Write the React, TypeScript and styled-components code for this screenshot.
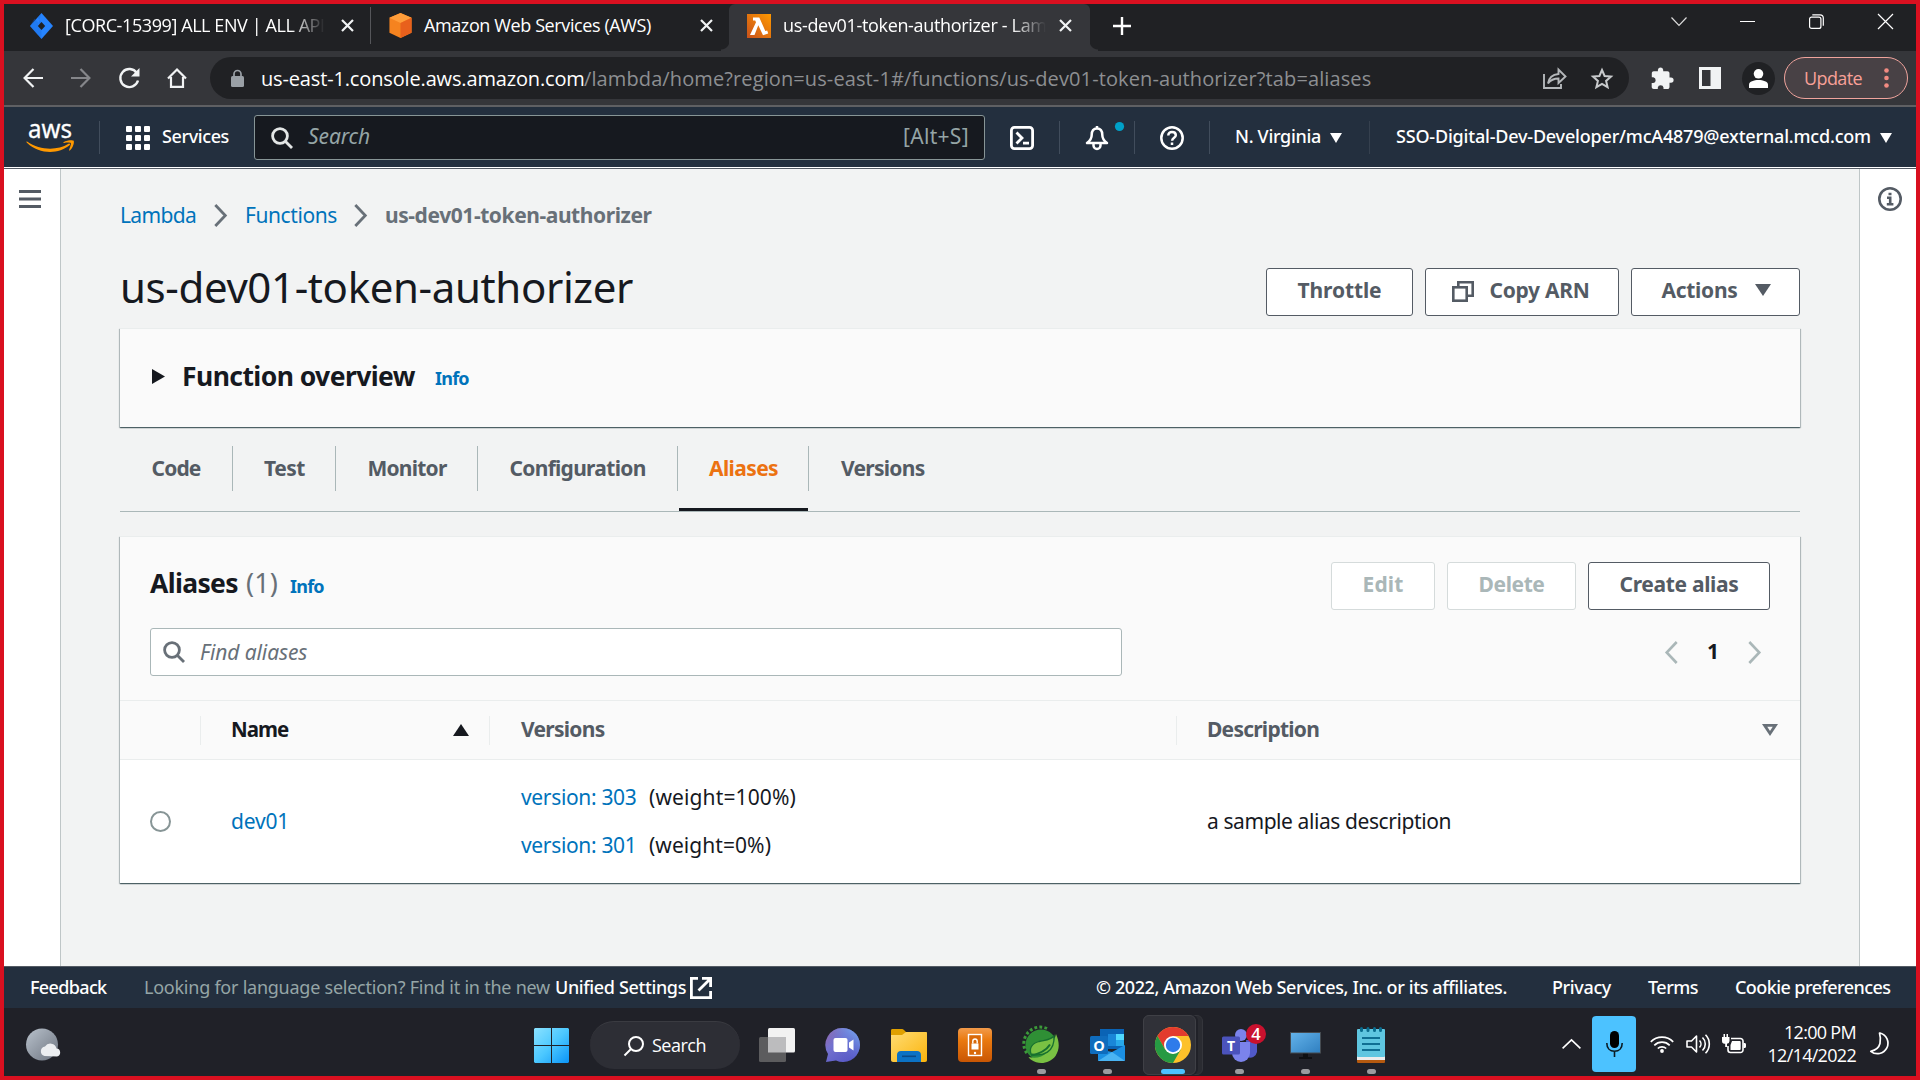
import React from "react";
import styled, { createGlobalStyle, css } from "styled-components";

const NOTO = '"Noto Sans", "Open Sans", sans-serif';
const OPEN = '"Open Sans", "Noto Sans", sans-serif';

const GlobalStyle = createGlobalStyle`
  * { box-sizing: border-box; }
  body { margin: 0; background: #d9101e; font-family: ${NOTO}; }
`;

const Screen = styled.div`
  width: 1920px;
  height: 1080px;
  border: 4px solid #d91020;
  display: flex;
  flex-direction: column;
  overflow: hidden;
`;

type LabelProps = {
  $w: number;
  $size?: number;
  $weight?: number;
  $ls?: number;
  $color?: string;
  $ml?: number;
  $italic?: boolean;
  $open?: boolean;
  $fade?: boolean;
  $up?: number;
  $down?: number;
};

const Label = styled.span<LabelProps>`
  flex: none;
  width: ${(p) => p.$w}px;
  margin-left: ${(p) => p.$ml ?? 0}px;
  padding-top: ${(p) => p.$down ?? 0}px;
  padding-bottom: ${(p) => p.$up ?? 0}px;
  font-family: ${(p) => (p.$open ? OPEN : NOTO)};
  font-size: ${(p) => p.$size ?? 21}px;
  font-weight: ${(p) => p.$weight ?? 400};
  font-style: ${(p) => (p.$italic ? "italic" : "normal")};
  letter-spacing: ${(p) => p.$ls ?? 0}px;
  line-height: 30px;
  color: ${(p) => p.$color ?? "#16191f"};
  white-space: nowrap;
  ${(p) =>
    p.$fade &&
    css`
      overflow: hidden;
      mask-image: linear-gradient(to right, #000 calc(100% - 34px), transparent);
    `}
`;

const Icon = styled.svg<{ $ml?: number; $mt?: number }>`
  flex: none;
  display: block;
  margin-left: ${(p) => p.$ml ?? 0}px;
  margin-top: ${(p) => p.$mt ?? 0}px;
  overflow: visible;
`;

/* ---------- Browser chrome ---------- */

const TabStrip = styled.div`
  height: 47px;
  background: #202124;
  display: flex;
  flex: none;
`;
const BrowserTab = styled.div<{ $w: number; $pl: number; $active?: boolean }>`
  position: relative;
  width: ${(p) => p.$w}px;
  padding-left: ${(p) => p.$pl}px;
  padding-bottom: 4px;
  display: flex;
  align-items: center;
  flex: none;
  ${(p) =>
    p.$active &&
    css`
      background: #35363a;
      border-radius: 6px 6px 0 0;
      &::before,
      &::after {
        content: "";
        position: absolute;
        bottom: 0;
        width: 8px;
        height: 10px;
      }
      &::before {
        left: -8px;
        background: radial-gradient(circle at 0 0, transparent 8px, #35363a 9px);
      }
      &::after {
        right: -8px;
        background: radial-gradient(circle at 100% 0, transparent 8px, #35363a 9px);
      }
    `}
`;
const Rule = styled.i<{ $h: number; $c: string; $ml?: number; $w?: number }>`
  flex: none;
  width: ${(p) => p.$w ?? 1}px;
  height: ${(p) => p.$h}px;
  margin-left: ${(p) => p.$ml ?? 0}px;
  background: ${(p) => p.$c};
`;
const WindowControls = styled.div`
  display: flex;
  align-items: flex-start;
  padding-left: 549px;
`;

const Toolbar = styled.div`
  height: 56px;
  flex: none;
  background: #35363a;
  border-bottom: 2px solid #5f6063;
  display: flex;
  align-items: center;
`;
const UrlBar = styled.div`
  flex: none;
  margin-left: 23px;
  width: 1419px;
  height: 42px;
  border-radius: 21px;
  background: #202124;
  display: flex;
  align-items: center;
`;
const Avatar = styled.div`
  flex: none;
  margin-left: 21px;
  width: 33px;
  height: 33px;
  border-radius: 50%;
  background: #202124;
  display: grid;
  place-items: center;
`;
const UpdatePill = styled.div`
  flex: none;
  margin-left: 9px;
  width: 124px;
  height: 42px;
  border: 1.5px solid #f0a49d;
  border-radius: 21px;
  background: #484145;
  display: flex;
  align-items: center;
`;

/* ---------- AWS navigation ---------- */

const AwsNav = styled.header`
  height: 62px;
  flex: none;
  background: #232f3e;
  border-bottom: 1px solid #545b64;
  box-shadow: inset 0 -1px 0 #fff;
  display: flex;
  align-items: center;
`;
const NavSearch = styled.div`
  flex: none;
  margin-left: 25px;
  width: 731px;
  height: 45px;
  border: 1px solid #879596;
  border-radius: 3px;
  background: #16191f;
  display: flex;
  align-items: center;
`;

/* ---------- Console page ---------- */

const PageBody = styled.div`
  flex: 1;
  min-height: 0;
  display: flex;
`;
const SidePanel = styled.aside<{ $w: number; $side: "left" | "right" }>`
  flex: none;
  width: ${(p) => p.$w}px;
  background: #fff;
  border-${(p) => (p.$side === "left" ? "right" : "left")}: 1px solid #bfc6c7;
`;
const Main = styled.main`
  flex: 1;
  background: #f2f3f3;
  padding: 31px 59px 0 59px;
`;
const Breadcrumb = styled.nav`
  height: 29px;
  display: flex;
  align-items: center;
`;
const TitleRow = styled.div`
  height: 48px;
  margin-top: 39px;
  display: flex;
  align-items: center;
`;
const PageTitle = styled.h1`
  margin: 0 auto 10px 0;
  font-size: 42px;
  font-weight: 400;
  letter-spacing: -0.374px;
  line-height: 48px;
  color: #16191f;
  white-space: nowrap;
`;
const ButtonGroup = styled.div`
  display: flex;
  gap: 12px;
`;
const Button = styled.button<{ $w: number; $disabled?: boolean }>`
  width: ${(p) => p.$w}px;
  height: 48px;
  padding: 0 0 4px;
  display: flex;
  align-items: center;
  justify-content: center;
  background: #fff;
  border: 1px solid ${(p) => (p.$disabled ? "#d5dbdb" : "#545b64")};
  border-radius: 3px;
`;
const cardFrame = css`
  border-top: 1px solid #eaeded;
  box-shadow: 0 1px 1px 0 rgba(0, 28, 36, 0.5), 1px 1px 1px 0 rgba(0, 28, 36, 0.2), -1px 1px 1px 0 rgba(0, 28, 36, 0.2);
`;
const OverviewCard = styled.section`
  ${cardFrame}
  height: 99px;
  margin-top: 12px;
  padding-bottom: 5px;
  background: #fafafa;
  display: flex;
  align-items: center;
`;
const TabBar = styled.div`
  height: 66px;
  margin-top: 19px;
  border-bottom: 1px solid #aab7b8;
  display: flex;
`;
const TabItem = styled.div<{ $w: number; $active?: boolean }>`
  width: ${(p) => p.$w}px;
  display: flex;
  flex-direction: column;
  ${(p) =>
    p.$active &&
    css`
      &::after {
        content: "";
        height: 4px;
        margin: 17px 1px 0;
        background: #16191f;
      }
    `}
`;
const TabFace = styled.div<{ $last?: boolean }>`
  height: 45px;
  flex: none;
  padding-bottom: 2px;
  border-right: ${(p) => (p.$last ? "0" : "1px solid #aab7b8")};
  display: flex;
  align-items: center;
  justify-content: center;
`;

const TableCard = styled.section`
  ${cardFrame}
  margin-top: 24px;
  background: #fff;
`;
const TableTools = styled.div`
  height: 164px;
  padding: 25px 30px 0;
  background: #fafafa;
  border-bottom: 1px solid #eaeded;
`;
const ToolRow = styled.div`
  height: 48px;
  display: flex;
  align-items: center;
  & + & {
    margin-top: 18px;
  }
`;
const Push = styled.div`
  margin-left: auto;
  display: flex;
  align-items: center;
`;
const FilterBox = styled.div`
  width: 972px;
  height: 48px;
  border: 1px solid #aab7b8;
  border-radius: 3px;
  background: #fff;
  display: flex;
  align-items: center;
`;
const gridColumns = css`
  display: grid;
  grid-template-columns: 80px 289px 687px 1fr;
  align-items: center;
`;
const HeadRow = styled.div`
  ${gridColumns}
  height: 59px;
  background: #fafafa;
  border-bottom: 1px solid #eaeded;
`;
const HeadCell = styled.div`
  height: 29px;
  padding-left: 30px;
  border-left: 1px solid #eaeded;
  display: flex;
  align-items: center;
`;
const BodyRow = styled.div`
  ${gridColumns}
  height: 123px;
`;
const Cell = styled.div`
  padding-left: 31px;
  display: flex;
  align-items: center;
`;
const VersionList = styled.div`
  padding-left: 32px;
  display: flex;
  flex-direction: column;
`;
const VersionLine = styled.div`
  height: 48px;
  display: flex;
  align-items: center;
`;
const Radio = styled.span`
  width: 21px;
  height: 21px;
  margin-left: 30px;
  border: 2px solid #879596;
  border-radius: 50%;
  background: #fff;
`;

const Footer = styled.footer`
  height: 42px;
  flex: none;
  background: #232f3e;
  border-top: 1px solid #545b64;
  display: flex;
  align-items: center;
`;

/* ---------- Taskbar ---------- */

const Taskbar = styled.div`
  height: 68px;
  flex: none;
  background: #202128;
  display: flex;
`;
const Slot = styled.div<{ $w: number; $ml?: number }>`
  flex: none;
  position: relative;
  width: ${(p) => p.$w}px;
  margin-left: ${(p) => p.$ml ?? 0}px;
  display: flex;
  flex-direction: column;
  align-items: center;
`;
const SlotIcon = styled.div`
  position: relative;
  height: 44px;
  margin-top: 15px;
  display: flex;
  align-items: center;
  justify-content: center;
`;
const RunDot = styled.i<{ $active?: boolean }>`
  position: relative;
  margin-top: 2px;
  width: ${(p) => (p.$active ? 24 : 9)}px;
  height: 5px;
  border-radius: 3px;
  background: ${(p) => (p.$active ? "#4cc2ff" : "#9b9b9f")};
`;
const ActivePlate = styled.div<{ $back?: boolean }>`
  position: absolute;
  left: 3px;
  top: 7px;
  width: ${(p) => (p.$back ? 60 : 53)}px;
  height: 60px;
  border-radius: 6px;
  background: ${(p) => (p.$back ? "#2a2b31" : "#303138")};
  border: 1px solid ${(p) => (p.$back ? "#34353b" : "#3f4046")};
  box-shadow: ${(p) => (p.$back ? "none" : "2px 0 0 #202128")};
`;
const SearchPill = styled.div`
  flex: none;
  margin: 13px 0 0 21px;
  width: 150px;
  height: 48px;
  border-radius: 24px;
  background: #2d2e35;
  border-top: 1px solid #3a3b41;
  display: flex;
  align-items: center;
`;
const Tray = styled.div`
  display: flex;
  align-items: center;
  padding-top: 3px;
`;
const MicButton = styled.div`
  flex: none;
  margin-left: 11px;
  width: 44px;
  height: 56px;
  border-radius: 4px;
  background: #4cc2ff;
  display: grid;
  place-items: center;
`;
const Clock = styled.div`
  width: 96px;
  margin: 0 0 0 14px;
  display: flex;
  flex-direction: column;
  align-items: flex-end;
  font: 400 18px/23px ${OPEN};
  letter-spacing: -0.7px;
  color: #fff;
`;

/* ---------- Icons ---------- */

const CloseX = ({ ml }: { ml: number }) => (
  <Icon $ml={ml} width="13" height="13" viewBox="0 0 13 13" stroke="#f1f3f4" strokeWidth="2.2">
    <path d="M1 1l11 11M12 1L1 12" />
  </Icon>
);
const Caret = ({ ml, color = "#fff", w = 12, h = 10, up = false }: { ml: number; color?: string; w?: number; h?: number; up?: boolean }) => (
  <Icon $ml={ml} width={w} height={h} viewBox="0 0 12 10" preserveAspectRatio="none">
    <path d={up ? "M6 0l6 10H0z" : "M0 0h12L6 10z"} fill={color} />
  </Icon>
);
const Magnifier = ({ ml, color }: { ml: number; color: string }) => (
  <Icon $ml={ml} width="22" height="22" viewBox="0 0 22 22" fill="none" stroke={color} strokeWidth="2.8">
    <circle cx="9" cy="9" r="7.4" />
    <path d="M14 14l7 7" />
  </Icon>
);
const ChevronRight = ({ ml, color = "#687078", w = 13 }: { ml: number; color?: string; w?: number }) => (
  <Icon $ml={ml} $mt={1} width={w} height="23" viewBox="0 0 13 23" fill="none" stroke={color} strokeWidth="2.8">
    <path d="M1.3 1l10 10.5-10 10.5" />
  </Icon>
);

const JiraIcon = () => (
  <Icon width="23" height="26" viewBox="0 0 23 24" preserveAspectRatio="none">
    <path d="M11.5 0L23 12 11.500 24 0 12z" fill="#2684ff" />
    <path d="M11.500 0L7.500 4.200l4 4.200v3.600L4.500 5 0 12l11.500 12V16L7.800 12z" fill="#1667db" opacity=".35" />
    <path d="M11.500 8.200L15.200 12l-3.700 3.800L7.800 12z" fill="#202124" />
  </Icon>
);
const CubeIcon = () => (
  <Icon width="23" height="25" viewBox="0 0 23 26">
    <path d="M11.500 0L23 5v15.500L11.500 26 0 20.500V5z" fill="#f5831f" />
    <path d="M11.500 0L23 5l-11.500 5.500L0 5z" fill="#ff9d3a" />
    <path d="M23 5v15.500L11.500 26V10.500z" fill="#e8601c" />
  </Icon>
);
const LambdaIcon = () => (
  <Icon width="24" height="24" viewBox="0 0 24 24">
    <defs>
      <linearGradient id="lam" x1="0" y1="1" x2="1" y2="0">
        <stop offset="0" stopColor="#c8511b" />
        <stop offset="1" stopColor="#f90" />
      </linearGradient>
    </defs>
    <path d="M0 0h24v24H0z" fill="url(#lam)" />
    <path d="M6 3.500h6.300l6 13.500 1.900-.6 1 3.200-5.200 1.700-4.700-10L7.500 21H3l6-12.800-.8-1.700H6z" fill="#fff" />
  </Icon>
);

function BrowserTabs() {
  return (
    <TabStrip>
      <BrowserTab $w={368} $pl={26}>
        <JiraIcon />
        <Label $w={260} $ml={12} $up={1} $open $size={18} $ls={-0.41} $color="#fff" $fade>[CORC-15399] ALL ENV | ALL API</Label>
        <CloseX ml={16} />
        <Rule $h={37} $c="#55565a" $ml={16} />
      </BrowserTab>
      <BrowserTab $w={357} $pl={17}>
        <CubeIcon />
        <Label $w={227} $ml={12} $up={1} $open $size={18} $ls={-0.392} $color="#fff">Amazon Web Services (AWS)</Label>
        <CloseX ml={49} />
      </BrowserTab>
      <BrowserTab $w={361} $pl={18} $active>
        <LambdaIcon />
        <Label $w={263} $ml={12} $up={1} $open $size={18} $ls={-0.33} $color="#fff" $fade>us-dev01-token-authorizer - Lam</Label>
        <CloseX ml={13} />
      </BrowserTab>
      <BrowserTab $w={30} $pl={23}>
        <Icon width="18" height="18" viewBox="0 0 18 18" stroke="#fff" strokeWidth="2.4">
          <path d="M9 0v18M0 9h18" />
        </Icon>
      </BrowserTab>
      <WindowControls>
        <Icon $mt={13} $ml={2} width="16" height="9" viewBox="0 0 16 9" fill="none" stroke="#ddd" strokeWidth="1.2"><path d="M.5.5L8 8.300 15.500.5" /></Icon>
        <Icon $mt={17} $ml={53} width="15" height="1" viewBox="0 0 15 1"><path d="M0 0h15v1H0z" fill="#fff" /></Icon>
        <Icon $mt={10} $ml={54} width="15" height="15" viewBox="0 0 15 15" fill="none" stroke="#fff" strokeWidth="1.2">
          <rect x=".6" y="3.100" width="11.300" height="11.300" rx="2" />
          <path d="M3.300.8h7.700a3.300 3.300 0 013.300 3.300v7.700" />
        </Icon>
        <Icon $mt={10} $ml={54} width="15" height="15" viewBox="0 0 15 15" stroke="#fff" strokeWidth="1.2"><path d="M0 0l15 15M15 0L0 15" /></Icon>
      </WindowControls>
    </TabStrip>
  );
}

function BrowserToolbar() {
  return (
    <Toolbar>
      <Icon $ml={19} width="20" height="20" viewBox="0 0 20 20" fill="none" stroke="#f1f3f4" strokeWidth="2.2"><path d="M10.500 1L1.600 10l8.900 9M1.600 10H20" /></Icon>
      <Icon $ml={28} width="20" height="20" viewBox="0 0 20 20" fill="none" stroke="#85868a" strokeWidth="2.200"><path d="M9.500 1l8.900 9-8.900 9M18.400 10H0" /></Icon>
      <Icon $ml={28} width="21" height="20" viewBox="0 0 21 20" fill="none" stroke="#f1f3f4" strokeWidth="2.400">
        <path d="M17.800 5A9 9 0 1 0 19 12.500" />
        <path d="M20.500 0v8.500H12z" fill="#f1f3f4" stroke="none" />
      </Icon>
      <Icon $ml={27} width="20" height="20" viewBox="0 0 20 20" fill="none" stroke="#f1f3f4" strokeWidth="2.200"><path d="M1 10.500L10 1.500l9 9M4 9v9.800h12V9" /></Icon>
      <UrlBar>
        <Icon $ml={21} width="13" height="17" viewBox="0 0 13 17">
          <rect y="6" width="13" height="11" rx="1.500" fill="#9aa0a6" />
          <path d="M3 7V4a3.500 3.500 0 017 0v3" fill="none" stroke="#9aa0a6" strokeWidth="1.700" />
        </Icon>
        <Label $w={323} $ml={17} $down={2} $open $size={20} $ls={-0.15} $color="#fff">us-east-1.console.aws.amazon.com</Label>
        <Label $w={787} $down={2} $open $size={20} $ls={0.11} $color="#8d8f92">/lambda/home?region=us-east-1#/functions/us-dev01-token-authorizer?tab=aliases</Label>
        <Icon $ml={172} width="24" height="21" viewBox="0 0 24 21" fill="none" stroke="#b4b7ba" strokeWidth="1.900">
          <path d="M1 6v14h17v-4" />
          <path d="M5 15.500C6 9 10 6.500 15.500 6V1.500L22.500 8.500l-7 6.500v-4.500C11 10.500 8 11.500 5 15.500z" />
        </Icon>
        <Icon $ml={24} width="22" height="21" viewBox="0 0 22 21" fill="none" stroke="#c8cacc" strokeWidth="2"><path d="M11 2l2.600 6 6.400.6-4.900 4.300 1.500 6.300L11 15.800l-5.600 3.400 1.500-6.300L2 8.600 8.400 8z" /></Icon>
      </UrlBar>
      <Icon $ml={22} width="22" height="22" viewBox="0 0 22 22" fill="#f1f3f4">
        <path d="M20 10.500h-1.500V6.300c0-1.200-.9-2.100-2.100-2.100h-4.200V2.700a2.700 2.700 0 00-5.300 0v1.500H2.800C1.600 4.200.8 5.100.8 6.300v4h1.500a2.900 2.900 0 010 5.700H.7v4c0 1.100 1 2 2.100 2h4v-1.500a2.900 2.900 0 015.700 0V22h4c1.100 0 2-.9 2-2.100v-4.200H20a2.600 2.600 0 000-5.200z" />
      </Icon>
      <Icon $ml={26} width="22" height="22" viewBox="0 0 22 22"><path d="M0 0h22v22H0zM3 3v16h8.500V3z" fill="#f1f3f4" fillRule="evenodd" /></Icon>
      <Avatar>
        <Icon width="19" height="19" viewBox="0 0 19 19" fill="#fff">
          <circle cx="9.500" cy="4.800" r="4.800" />
          <path d="M0 19v-3.500c0-3 5-4.500 9.500-4.500s9.500 1.500 9.500 4.500V19z" />
        </Icon>
      </Avatar>
      <UpdatePill>
        <Label $w={58} $ml={19} $open $size={18} $ls={-0.615} $color="#f8a097">Update</Label>
        <Icon $ml={22} width="5" height="20" viewBox="0 0 5 20" fill="#f28b82">
          <circle cx="2.500" cy="2.500" r="2.300" /><circle cx="2.500" cy="10" r="2.300" /><circle cx="2.500" cy="17.500" r="2.300" />
        </Icon>
      </UpdatePill>
    </Toolbar>
  );
}

function ConsoleNav() {
  const nav = { $size: 18, $weight: 500, $color: "#fff" };
  return (
    <AwsNav>
      <Icon $ml={23} width="48" height="30" viewBox="0 0 48 30">
        <text x="1" y="15" fontFamily={NOTO} fontSize="26" fontWeight="400" fill="#fff" stroke="#fff" strokeWidth=".3" textLength="44" lengthAdjust="spacingAndGlyphs">aws</text>
        <path d="M0 18.500c13.500 9 30 9.200 41.500 2.200 1.200-.7 2.200.6 1 1.600C31.500 31.500 12.500 31.500.2 20c-.9-.8-1.200-2-.2-1.500z" fill="#f90" />
        <path d="M36.500 19.200c3.500-2.300 9.500-2.500 10.200-1.400.7 1.300-.4 6.900-3.800 9.600-.6.4-1.100.2-.8-.5.8-1.900 2.300-5.800 1.700-6.800-.6-.9-4.500-.6-6.700-.2-.7 0-1.100-.4-.6-.7z" fill="#f90" />
      </Icon>
      <Rule $h={33} $c="#414d5c" $ml={24} />
      <Icon $ml={26} width="24" height="24" viewBox="0 0 24 24" fill="#fff">
        {[0, 9, 18].map((y) => [0, 9, 18].map((x) => <rect key={`${x}-${y}`} x={x} y={y} width="6" height="6" rx="1" />))}
      </Icon>
      <Label {...nav} $w={67} $ml={12} $ls={-0.391} $up={3}>Services</Label>
      <NavSearch>
        <Magnifier ml={16} color="#e3e6e6" />
        <Label $w={62} $ml={15} $ls={-0.1} $up={3} $italic $color="#95a5a6">Search</Label>
        <Push><Label $w={81} $ls={0.3} $up={3} $color="#95a5a6">[Alt+S]</Label></Push>
      </NavSearch>
      <Icon $ml={25} width="24" height="24" viewBox="0 0 24 24" fill="none" stroke="#fff" strokeWidth="2.800">
        <rect x="1.400" y="1.400" width="21.200" height="21.200" rx="3" />
        <path d="M6.500 6.500L12 12l-5.500 5.500M13 17.200h6" />
      </Icon>
      <Rule $h={33} $c="#414d5c" $ml={25} />
      <Icon $ml={25} width="40" height="24" viewBox="0 0 40 24" fill="none" stroke="#fff" strokeWidth="2.500">
        <path d="M12 2.500c-4 0-5.300 3.200-5.300 6.500 0 4-2 6-4.700 8h20c-2.700-2-4.700-4-4.700-8 0-3.300-1.300-6.500-5.300-6.500zM12 0v3" strokeLinejoin="round" />
        <path d="M8.500 17.500v2a3.500 3.500 0 007 0v-2" />
        <circle cx="34.500" cy="0.500" r="4.600" fill="#00a1c9" stroke="none" />
      </Icon>
      <Rule $h={33} $c="#414d5c" $ml={9} />
      <Icon $ml={25} width="24" height="24" viewBox="0 0 24 24" fill="none" stroke="#fff" strokeWidth="2.500">
        <circle cx="12" cy="12" r="10.700" />
        <path d="M8.300 9.500C8.300 7.400 9.800 6 12 6s3.800 1.300 3.800 3.200c0 2.600-3.700 2.500-3.700 5.600M12 16.500v2.500" />
      </Icon>
      <Rule $h={33} $c="#414d5c" $ml={25} />
      <Label {...nav} $w={86} $ml={25} $ls={-0.307} $up={3}>N. Virginia</Label>
      <Caret ml={9} />
      <Rule $h={33} $c="#35404e" $ml={27} />
      <Label {...nav} $w={475} $ml={26} $ls={-0.192} $up={3}>SSO-Digital-Dev-Developer/mcA4879@external.mcd.com</Label>
      <Caret ml={9} />
    </AwsNav>
  );
}

const LINK = "#0073bb";
const bold = { $weight: 700, $color: "#545b64" };

const sections: { name: string; w: number; lw: number; ls: number }[] = [
  { name: "Code", w: 113, lw: 49, ls: -0.85 },
  { name: "Test", w: 103, lw: 40, ls: -0.46 },
  { name: "Monitor", w: 142, lw: 78, ls: -0.78 },
  { name: "Configuration", w: 200, lw: 136, ls: -0.71 },
  { name: "Aliases", w: 131, lw: 68, ls: -0.61 },
  { name: "Versions", w: 148, lw: 84, ls: -0.72 },
];

const versions = [
  { id: "303", weight: "100%", w: 147, ls: 0.127 },
  { id: "301", weight: "0%", w: 122, ls: 0.061 },
];

function AliasesTable() {
  return (
    <TableCard>
      <TableTools>
        <ToolRow>
          <Label $w={88} $size={26.500} $weight={700} $ls={-0.65} $up={6}>Aliases</Label>
          <Label $w={32} $ml={8} $size={27} $ls={0.115} $up={6} $color="#687078">(1)</Label>
          <Label $w={34} $ml={12} $size={18} $weight={700} $ls={-0.78} $color={LINK}>Info</Label>
          <Push>
            <ButtonGroup>
              <Button $w={104} $disabled><Label {...bold} $w={41} $ls={0.14} $color="#aab7b8">Edit</Label></Button>
              <Button $w={129} $disabled><Label {...bold} $w={66} $ls={-0.39} $color="#aab7b8">Delete</Label></Button>
              <Button $w={182}><Label {...bold} $w={119} $ls={-0.327}>Create alias</Label></Button>
            </ButtonGroup>
          </Push>
        </ToolRow>
        <ToolRow>
          <FilterBox>
            <Magnifier ml={12} color="#687078" />
            <Label $w={107} $ml={15} $ls={-0.1} $up={1} $italic $color="#687078">Find aliases</Label>
          </FilterBox>
          <Push>
            <Icon width="13" height="23" viewBox="0 0 13 23" fill="none" stroke="#aab7b8" strokeWidth="2.600"><path d="M11.700 1l-10 10.500 10 10.500" /></Icon>
            <Label $w={12} $ml={29} $weight={700} $up={3}>1</Label>
            <Icon $ml={29} width="13" height="23" viewBox="0 0 13 23" fill="none" stroke="#aab7b8" strokeWidth="2.600"><path d="M1.300 1l10 10.500-10 10.500" /></Icon>
            <Rule $h={1} $w={9} $c="transparent" />
          </Push>
        </ToolRow>
      </TableTools>
      <HeadRow>
        <span />
        <HeadCell>
          <Label $w={57} $weight={700} $size={20.500} $ls={-1} $up={3}>Name</Label>
          <Caret ml={165} w={16} h={12} color="#16191f" up />
        </HeadCell>
        <HeadCell><Label {...bold} $w={84} $ml={1} $ls={-0.72} $up={3}>Versions</Label></HeadCell>
        <HeadCell>
          <Label {...bold} $w={112} $ls={-0.76} $up={3}>Description</Label>
          <Icon $ml={443} width="16" height="12" viewBox="0 0 16 12" fill="none" stroke="#687078" strokeWidth="2.800"><path d="M2.600 1.400h10.800L8 9.500z" /></Icon>
        </HeadCell>
      </HeadRow>
      <BodyRow>
        <Radio />
        <Cell><Label $w={57} $ls={-0.2} $up={2} $color={LINK}>dev01</Label></Cell>
        <VersionList>
          {versions.map((v) => (
            <VersionLine key={v.id}>
              <Label $w={115} $ls={-0.34} $up={1} $color={LINK}>version: {v.id}</Label>
              <Label $w={v.w} $ml={13} $ls={v.ls} $up={1}>(weight={v.weight})</Label>
            </VersionLine>
          ))}
        </VersionList>
        <Cell><Label $w={244} $ls={-0.418} $up={2}>a sample alias description</Label></Cell>
      </BodyRow>
    </TableCard>
  );
}

function ConsolePage() {
  return (
    <PageBody>
      <SidePanel $w={57} $side="left">
        <Icon $ml={15} $mt={21} width="22" height="18" viewBox="0 0 22 18" fill="#545b64"><path d="M0 0h22v3H0zM0 7.500h22v3H0zM0 15h22v3H0z" /></Icon>
      </SidePanel>
      <Main>
        <Breadcrumb>
          <Label $w={76} $ls={-0.672} $color={LINK}>Lambda</Label>
          <ChevronRight ml={18} />
          <Label $w={92} $ml={18} $ls={-0.41} $color={LINK}>Functions</Label>
          <ChevronRight ml={17} />
          <Label $w={266} $ml={18} $weight={700} $ls={-0.43} $color="#687078">us-dev01-token-authorizer</Label>
        </Breadcrumb>
        <TitleRow>
          <PageTitle>us-dev01-token-authorizer</PageTitle>
          <ButtonGroup>
            <Button $w={147}><Label {...bold} $w={84} $ls={-0.11}>Throttle</Label></Button>
            <Button $w={194}>
              <Icon $mt={3} width="22" height="21" viewBox="0 0 22 21" fill="none" stroke="#545b64" strokeWidth="2.600">
                <rect x="1.300" y="6.300" width="13.400" height="13.400" />
                <path d="M6.300 6V1.300h14.400v13.400H15" />
              </Icon>
              <Label {...bold} $w={105} $ml={13} $ls={-0.287}>Copy ARN</Label>
            </Button>
            <Button $w={169}>
              <Label {...bold} $w={75} $ml={1} $ls={-0.297}>Actions</Label>
              <Caret ml={18} w={16} h={12} color="#545b64" />
            </Button>
          </ButtonGroup>
        </TitleRow>
        <OverviewCard>
          <Icon $ml={32} $mt={2} width="13" height="15" viewBox="0 0 13 15"><path d="M0 0l13 7.500L0 15z" fill="#16191f" /></Icon>
          <Label $w={233} $ml={17} $size={26.500} $weight={700} $ls={-0.57}>Function overview</Label>
          <Label $w={34} $ml={20} $down={4} $size={18} $weight={700} $ls={-0.78} $color={LINK}>Info</Label>
        </OverviewCard>
        <TabBar>
          {sections.map((s) => {
            const active = s.name === "Aliases";
            return (
              <TabItem key={s.name} $w={s.w} $active={active}>
                <TabFace $last={s.name === "Versions"}>
                  <Label {...bold} $w={s.lw} $ls={s.ls} $color={active ? "#ec7211" : "#545b64"}>{s.name}</Label>
                </TabFace>
              </TabItem>
            );
          })}
        </TabBar>
        <AliasesTable />
      </Main>
      <SidePanel $w={57} $side="right">
        <Icon $ml={18} $mt={18} width="24" height="24" viewBox="0 0 24 24" fill="none" stroke="#545b64" strokeWidth="2.600">
          <circle cx="12" cy="12" r="10.700" />
          <path d="M9 10.800h3.200V17M8.800 17.200h6.600M10.500 7h3" />
        </Icon>
      </SidePanel>
    </PageBody>
  );
}

function ConsoleFooter() {
  const link = { $size: 18, $weight: 500, $color: "#fff", $up: 1 };
  return (
    <Footer>
      <Label {...link} $w={77} $ml={26} $ls={-0.65}>Feedback</Label>
      <Label $w={406} $ml={37} $size={18} $ls={-0.242} $up={1} $color="#95a5a6">Looking for language selection? Find it in the new</Label>
      <Label {...link} $w={131} $ml={5} $ls={-0.372}>Unified Settings</Label>
      <Icon $ml={4} width="22" height="22" viewBox="0 0 22 22" fill="none" stroke="#fff" strokeWidth="2.800">
        <path d="M8 1.400H1.400v19.200h19.200V14M12 1.400h8.600V10M20.600 1.400L8.500 13.500" />
      </Icon>
      <Label {...link} $w={411} $ml={384} $ls={-0.385}>© 2022, Amazon Web Services, Inc. or its affiliates.</Label>
      <Label {...link} $w={59} $ml={45} $ls={-0.368}>Privacy</Label>
      <Label {...link} $w={50} $ml={37} $ls={-0.522}>Terms</Label>
      <Label {...link} $w={156} $ml={37} $ls={-0.57}>Cookie preferences</Label>
    </Footer>
  );
}

const TaskViewIcon = () => (
  <Icon width="36" height="34" viewBox="0 0 36 34">
    <rect x="9" width="27" height="24.500" rx="1.500" fill="#f2f2f2" />
    <rect y="9" width="27" height="25" rx="1.500" fill="#5c5c5e" />
    <rect x="9" y="9" width="18" height="15.500" fill="#bcbcbe" />
  </Icon>
);
const ChatIcon = () => (
  <Icon width="34" height="34" viewBox="0 0 34 34">
    <defs>
      <linearGradient id="chat" x1="0" y1="0" x2=".8" y2="1">
        <stop offset="0" stopColor="#a1679f" />
        <stop offset=".4" stopColor="#7472cf" />
        <stop offset="1" stopColor="#5455c4" />
      </linearGradient>
      <linearGradient id="chat2" x1="1" y1="0" x2=".3" y2=".7">
        <stop offset="0" stopColor="#78b4f8" />
        <stop offset="1" stopColor="#5b5cc9" stopOpacity="0" />
      </linearGradient>
    </defs>
    <path d="M17 0a17 17 0 11-7 32.500L0 34l2-8A17 17 0 0117 0z" fill="url(#chat)" />
    <path d="M17 0a17 17 0 11-7 32.500L0 34l2-8A17 17 0 0117 0z" fill="url(#chat2)" />
    <rect x="7.500" y="10" width="14" height="14" rx="2" fill="#fff" />
    <path d="M23 14.500l4.500-3v11l-4.500-3z" fill="#fff" />
  </Icon>
);
const FolderIcon = () => (
  <Icon width="36" height="33" viewBox="0 0 36 33">
    <defs>
      <linearGradient id="fold" x1="0" y1="0" x2="1" y2="1">
        <stop offset="0" stopColor="#ffdc73" />
        <stop offset="1" stopColor="#fbb40c" />
      </linearGradient>
    </defs>
    <path d="M0 1.500C0 .5.500 0 1.500 0h9c1.500 0 2 .5 3 1.500L15.500 3.500V7H0z" fill="#dfa000" />
    <path d="M0 6h11l4-3h20c.6 0 1 .4 1 1v27c0 1-.5 2-2 2H2c-1 0-2-1-2-2z" fill="url(#fold)" />
    <path d="M6 33v-7c0-2.500 1.500-4 4-4h16c2.500 0 4 1.500 4 4v7z" fill="#0c72c4" />
    <path d="M11 27.300h14" stroke="#0a4a87" strokeWidth="1.600" />
  </Icon>
);
const OrangeIcon = () => (
  <Icon width="34" height="34" viewBox="0 0 34 34">
    <defs>
      <linearGradient id="org" x1="0" y1="0" x2="0" y2="1">
        <stop offset="0" stopColor="#f29a4a" />
        <stop offset=".35" stopColor="#ea7a10" />
        <stop offset="1" stopColor="#c95604" />
      </linearGradient>
    </defs>
    <rect width="34" height="34" rx="4" fill="url(#org)" />
    <rect x="10.500" y="6.500" width="13" height="21" fill="#d9690a" stroke="#fff" strokeWidth="1.400" />
    <rect x="13.500" y="15.500" width="7" height="6" fill="#fff" />
    <path d="M14.800 15.500v-2.300a2.200 2.200 0 014.400 0v2.300" fill="none" stroke="#fff" strokeWidth="1.400" />
    <circle cx="17" cy="25" r="1.200" fill="#fff" />
  </Icon>
);
const SpringIcon = () => (
  <Icon width="36" height="36" viewBox="0 0 36 36">
    <circle cx="18" cy="18" r="15.500" fill="#2f8f35" />
    <path d="M24 1.500A16.500 16.500 0 0 0 4.500 27" fill="none" stroke="#3c9a3a" strokeWidth="3" strokeDasharray="2.800 2.200" />
    <path d="M33 7c3.500 8 4 15-.5 22-6 8-17 9-24 4 0 0-2-1-3-3 12 3 23-3 27.500-23z" fill="#79c143" />
    <path d="M31 9C28 13 22 13 16 14.500 9 16.500 6 21 8 27c12 3 24-2 23-18z" fill="#79c143" stroke="#17702f" strokeWidth="1.300" />
    <path d="M8 28.500c7.500-1.500 15-4.500 19-11" fill="none" stroke="#17702f" strokeWidth="2" />
  </Icon>
);
const OutlookIcon = () => (
  <Icon width="35" height="32" viewBox="0 0 35 32">
    <path d="M10 0h24v20H10z" fill="#0a63b5" />
    <path d="M18 5h8v6h-8zM18 11h8v6h-8z" fill="#1a86d8" />
    <path d="M26 5h8v6h-8z" fill="#50d9ff" /><path d="M26 11h8v6h-8z" fill="#28a8ea" />
    <path d="M8 20l14 3 13-7v15c0 .6-.4 1-1 1H9c-.6 0-1-.4-1-1z" fill="#1b8fe3" />
    <path d="M8 32l14-9 13 9z" fill="#4ab4f3" />
    <rect y="7" width="18" height="18" rx="1.500" fill="#0f6cbd" />
    <text x="9" y="21.500" textAnchor="middle" fontFamily={OPEN} fontWeight="700" fontSize="14.500" fill="#fff">O</text>
  </Icon>
);
const ChromeIcon = () => (
  <Icon width="36" height="36" viewBox="0 0 36 36">
    <circle cx="18" cy="18" r="18" fill="#fdc12a" />
    <path d="M18 9h15.600A18 18 0 002.400 9l7.800 13.500z" fill="#e33b2e" />
    <path d="M2.400 9A18 18 0 0018 36l7.800-13.500L18 27l-7.800-4.500z" fill="#269a43" />
    <circle cx="18" cy="18" r="9" fill="#fff" />
    <circle cx="18" cy="18" r="7.200" fill="#2f7bea" />
  </Icon>
);
const TeamsIcon = () => (
  <Icon width="35" height="33" viewBox="0 0 35 33">
    <path d="M24 11h11v12a7 7 0 01-10 5z" fill="#5059c9" />
    <circle cx="19" cy="6" r="6" fill="#7b83eb" />
    <path d="M10 13h18v11a9 9 0 01-18 0z" fill="#7b83eb" />
    <rect y="7.500" width="18" height="18" rx="1.500" fill="#4b53bc" />
    <text x="9" y="21.500" textAnchor="middle" fontFamily={OPEN} fontWeight="700" fontSize="14" fill="#fff">T</text>
    <circle cx="34" cy="5" r="10" fill="#c9112e" />
    <text x="34" y="11" textAnchor="middle" fontFamily={OPEN} fontWeight="600" fontSize="16.500" fill="#fff">4</text>
  </Icon>
);
const MonitorIcon = () => (
  <Icon width="31" height="27" viewBox="0 0 31 27">
    <defs>
      <linearGradient id="mon" x1="0" y1="0" x2="1" y2="1">
        <stop offset="0" stopColor="#64b3ea" />
        <stop offset="1" stopColor="#2f7fc0" />
      </linearGradient>
    </defs>
    <path d="M13 21h5v4h4v2H9v-2h4z" fill="#0f1013" />
    <rect x=".5" y=".5" width="30" height="20.500" fill="url(#mon)" stroke="#454b51" />
  </Icon>
);
const NotepadIcon = () => (
  <Icon width="28" height="36" viewBox="0 0 28 36">
    <path d="M0 33h28v1.500c0 1-.5 1.500-1.500 1.500h-25C.5 36 0 35.500 0 34.500z" fill="#b4590f" />
    <path d="M0 29h28v4H0z" fill="#ececec" />
    <rect y="2" width="28" height="28" rx="1" fill="#5fc6e0" />
    <path d="M5 11h18M5 17h18M5 23h18" stroke="#0f6f93" strokeWidth="2" />
    <path d="M4.500 1.500v2M11 1.500v2M17.500 1.500v2M23.500 1.500v2" stroke="#0a6c8e" strokeWidth="3" strokeLinecap="round" />
  </Icon>
);

const apps: { key: string; icon: React.ReactNode; state?: "open" | "active" }[] = [
  { key: "taskview", icon: <TaskViewIcon /> },
  { key: "chat", icon: <ChatIcon /> },
  { key: "folder", icon: <FolderIcon /> },
  { key: "orange", icon: <OrangeIcon /> },
  { key: "spring", icon: <SpringIcon />, state: "open" },
  { key: "outlook", icon: <OutlookIcon />, state: "open" },
  { key: "chrome", icon: <ChromeIcon />, state: "active" },
  { key: "teams", icon: <TeamsIcon />, state: "open" },
  { key: "monitor", icon: <MonitorIcon />, state: "open" },
  { key: "notepad", icon: <NotepadIcon />, state: "open" },
];

function WindowsTaskbar() {
  return (
    <Taskbar>
      <Slot $w={36} $ml={22}>
        <SlotIcon>
          <Icon width="36" height="34" viewBox="0 0 36 34">
            <defs>
              <linearGradient id="moonball" x1="0" y1="0" x2="1" y2="1">
                <stop offset="0" stopColor="#b9c2cc" />
                <stop offset="1" stopColor="#6d7480" />
              </linearGradient>
            </defs>
            <circle cx="16" cy="16.500" r="16" fill="url(#moonball)" />
            <path d="M18.500 28a4.800 4.800 0 01.5-9.400 6.300 6.300 0 0111.500 2A4 4 0 0131 28.500z" fill="#eceef1" />
          </Icon>
        </SlotIcon>
      </Slot>
      <Slot $w={35} $ml={472}>
        <SlotIcon>
          <Icon width="35" height="35" viewBox="0 0 35 35">
            <defs>
              <linearGradient id="win" x1="0" y1="0" x2="35" y2="35" gradientUnits="userSpaceOnUse">
                <stop offset="0" stopColor="#8be2ff" />
                <stop offset=".5" stopColor="#4cc8ff" />
                <stop offset="1" stopColor="#0a94f7" />
              </linearGradient>
            </defs>
            <path d="M1 0h16v17H0V1zM18 0h16l1 1v16H18zM0 18h17v17H1l-1-1zM18 18h17v16l-1 1H18z" fill="url(#win)" />
          </Icon>
        </SlotIcon>
      </Slot>
      <SearchPill>
        <Icon $ml={34} width="20" height="20" viewBox="0 0 20 20" fill="none" stroke="#fff" strokeWidth="2"><circle cx="12" cy="8" r="7" /><path d="M7 13l-6.500 6.500" /></Icon>
        <Label $w={54} $ml={8} $up={2} $open $size={18} $ls={-0.5} $color="#fff">Search</Label>
      </SearchPill>
      <Slot $w={4} />
      {apps.map((app) => (
        <Slot key={app.key} $w={66}>
          {app.state === "active" && (
            <>
              <ActivePlate $back />
              <ActivePlate />
            </>
          )}
          <SlotIcon>{app.icon}</SlotIcon>
          {app.state && <RunDot $active={app.state === "active"} />}
        </Slot>
      ))}
      <Tray>
        <Icon $ml={158} width="19" height="10" viewBox="0 0 19 10" fill="none" stroke="#fff" strokeWidth="1.600"><path d="M.6 9.400l8.900-8.600 8.900 8.600" /></Icon>
        <MicButton>
          <Icon width="17" height="26" viewBox="0 0 17 26" fill="none" stroke="#0b1a22" strokeWidth="1.600">
            <rect x="4" width="9" height="17" rx="4.500" fill="#000" stroke="none" />
            <path d="M.8 12c0 5 3 8.300 7.700 8.300s7.700-3.300 7.700-8.300M8.500 20.300V26" />
          </Icon>
        </MicButton>
        <Icon $ml={14} width="24" height="18" viewBox="0 0 24 18" fill="none" stroke="#fff" strokeWidth="1.700">
          <path d="M.8 6.800a15.700 15.700 0 0122.400 0M4.300 10.300a10.800 10.800 0 0115.400 0M7.800 13.500a6 6 0 018.400 0" />
          <circle cx="12" cy="16" r="1.900" fill="#fff" stroke="none" />
        </Icon>
        <Icon $ml={12} width="24" height="20" viewBox="0 0 24 20" fill="none" stroke="#fff" strokeWidth="1.600">
          <path d="M1 7v6h4.500l5 5V2l-5 5z" strokeLinejoin="round" />
          <path d="M13.500 6.500a5 5 0 010 7M16.500 3.500a9 9 0 010 13M19.500.8a13 13 0 010 18.400" />
        </Icon>
        <Icon $ml={12} width="24" height="19" viewBox="0 0 24 19">
          <path d="M9 4.500h9.500a2.500 2.500 0 012.500 2.500v9a2.500 2.500 0 01-2.500 2.500h-10A2.500 2.500 0 016 16v-4" fill="none" stroke="#fff" strokeWidth="1.600" />
          <path d="M8.500 11l1.500-4h7.500c.8 0 1.200.4 1.200 1.200v6.600c0 .8-.4 1.200-1.200 1.200h-9z" fill="#fff" />
          <path d="M21.500 9h1c1 0 1.500.6 1.500 1.500v2c0 .900-.5 1.500-1.500 1.500h-1zM1.500 0H3v3h1.500V0H6v3h1.500v4A2.800 2.800 0 015 9.700V13H3.200V9.700A2.800 2.800 0 010 7V3h1.500z" fill="#fff" />
        </Icon>
        <Clock>
          <span>12:00 PM</span>
          <span>12/14/2022</span>
        </Clock>
        <Icon $ml={14} width="20" height="23" viewBox="0 0 20 23" fill="none" stroke="#fff" strokeWidth="1.700" strokeLinejoin="round">
          <path d="M10 1a10.500 10.500 0 11-9.200 18.300C6.500 18 9 15.500 10 11.500 10.800 8 10.500 4.500 9.500 1z" />
        </Icon>
      </Tray>
    </Taskbar>
  );
}

export default function App() {
  return (
    <>
      <GlobalStyle />
      <Screen>
        <BrowserTabs />
        <BrowserToolbar />
        <ConsoleNav />
        <ConsolePage />
        <ConsoleFooter />
        <WindowsTaskbar />
      </Screen>
    </>
  );
}
